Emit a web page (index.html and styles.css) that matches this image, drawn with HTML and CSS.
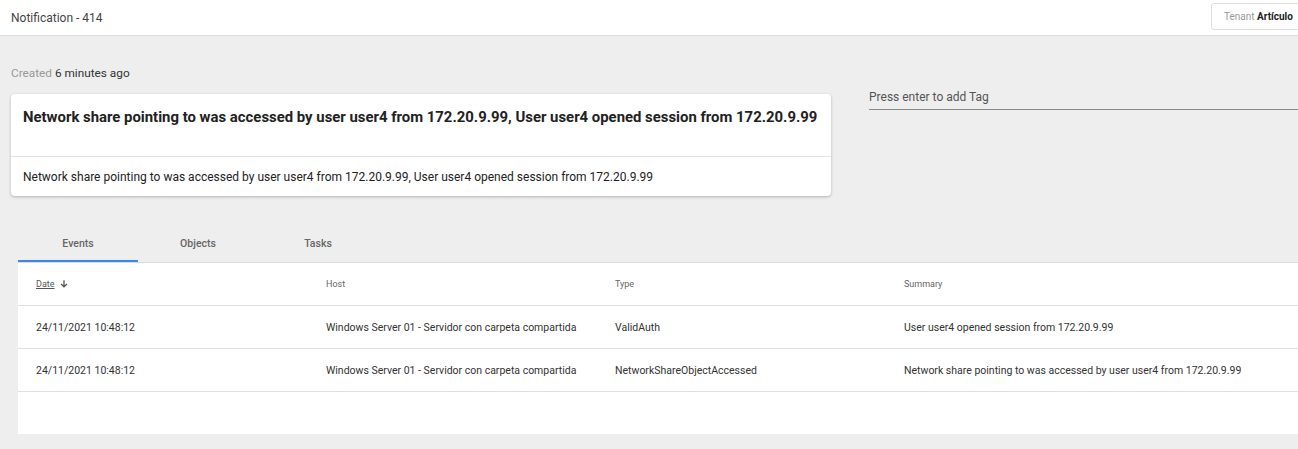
FILE: index.html
```html
<!DOCTYPE html>
<html lang="en">
<head>
<meta charset="utf-8">
<title>Notification - 414</title>
<link rel="stylesheet" href="styles.css">
</head>
<body>
<header class="topbar">
  <div class="page-title">Notification - 414</div>
  <div class="tenant"><span class="tenant-label">Tenant</span> <span class="tenant-name">Artículo</span></div>
</header>
<main class="content">
  <div class="meta"><span class="meta-label">Created</span> 6 minutes ago</div>
  <div class="top-row">
    <section class="card">
      <h1 class="card-title">Network share pointing to was accessed by user user4 from 172.20.9.99, User user4 opened session from 172.20.9.99</h1>
      <p class="card-body">Network share pointing to was accessed by user user4 from 172.20.9.99, User user4 opened session from 172.20.9.99</p>
    </section>
    <div class="tag-input">Press enter to add Tag</div>
  </div>
  <nav class="tabs">
    <div class="tab active">Events</div>
    <div class="tab">Objects</div>
    <div class="tab">Tasks</div>
  </nav>
  <section class="table">
    <div class="row head">
      <div class="cell"><span class="sort">Date</span><svg class="sort-icon" viewBox="0 0 12 12" width="10" height="10"><path d="M6 1.5v7.5M2.5 6L6 9.5 9.5 6" fill="none" stroke="#555" stroke-width="1.6"/></svg></div>
      <div class="cell">Host</div>
      <div class="cell">Type</div>
      <div class="cell">Summary</div>
    </div>
    <div class="row">
      <div class="cell">24/11/2021 10:48:12</div>
      <div class="cell">Windows Server 01 - Servidor con carpeta compartida</div>
      <div class="cell">ValidAuth</div>
      <div class="cell">User user4 opened session from 172.20.9.99</div>
    </div>
    <div class="row">
      <div class="cell">24/11/2021 10:48:12</div>
      <div class="cell">Windows Server 01 - Servidor con carpeta compartida</div>
      <div class="cell">NetworkShareObjectAccessed</div>
      <div class="cell">Network share pointing to was accessed by user user4 from 172.20.9.99</div>
    </div>
    <div class="table-foot"></div>
  </section>
</main>
</body>
</html>
```

FILE: styles.css
```css
html, body {
  margin: 0;
  padding: 0;
}
body {
  background: #eeeeee;
  font-family: Roboto, "Liberation Sans", sans-serif;
  color: #333;
  overflow: hidden;
  width: 1298px;
  height: 449px;
}
.topbar {
  height: 35px;
  background: #fff;
  border-bottom: 1px solid #dcdcdc;
  display: flex;
  align-items: center;
  justify-content: space-between;
  padding-left: 11px;
  box-sizing: content-box;
}
.page-title {
  font-size: 12px;
  color: #444;
}
.tenant {
  width: 100px;
  height: 27px;
  margin-right: -13px;
  margin-top: -2px;
  border: 1px solid #ddd;
  border-radius: 3px;
  box-sizing: border-box;
  padding-left: 12px;
  font-size: 10px;
  line-height: 25px;
  white-space: nowrap;
}
.tenant-label { color: #999; }
.tenant-name { color: #222; font-weight: 700; }
.content {
  padding: 30px 0 0 11px;
}
.meta {
  font-size: 11.8px;
  color: #333;
  line-height: 15px;
}
.meta-label { color: #999; }
.top-row {
  display: flex;
  align-items: flex-start;
  margin-top: 13px;
}
.card {
  width: 820px;
  background: #fff;
  border-radius: 4px;
  box-shadow: 0 1px 3px rgba(0,0,0,0.25);
  flex: none;
}
.card-title {
  margin: 0;
  font-size: 14.9px;
  font-weight: 700;
  color: #222;
  padding: 14px 12px 0;
  height: 48px;
  line-height: 18px;
  border-bottom: 1px solid #e3e3e3;
  white-space: nowrap;
}
.card-body {
  margin: 0;
  font-size: 12px;
  line-height: 15px;
  padding: 13px 12px 11px;
  color: #222;
  white-space: nowrap;
}
.tag-input {
  margin-left: 38px;
  flex: 1;
  margin-right: -20px;
  font-size: 12px;
  color: #555;
  line-height: 14px;
  margin-top: -4px;
  padding-bottom: 5px;
  border-bottom: 1px solid #8a8a8a;
}
.tabs {
  display: flex;
  margin-top: 32px;
  margin-left: 7px;
}
.tab {
  width: 120px;
  height: 34px;
  box-sizing: border-box;
  text-align: center;
  font-size: 10.5px;
  color: #666;
  font-weight: 500;
  line-height: 32px;
}
.tab.active {
  border-bottom: 2px solid #3b87f0;
}
.table {
  margin-left: 7px;
  margin-right: -40px;
  background: #fff;
  border-top: 1px solid #dcdcdc;
}
.row {
  display: grid;
  grid-template-columns: 290px 289px 289px 1fr;
  height: 43px;
  box-sizing: border-box;
  border-bottom: 1px solid #e0e0e0;
  align-items: center;
  font-size: 10.5px;
  color: #333;
}
.row.head {
  font-size: 9px;
  color: #666;
}
.cell {
  padding-left: 18px;
  white-space: nowrap;
  display: flex;
  align-items: center;
}
.sort {
  text-decoration: underline;
  color: #555;
}
.sort-icon {
  margin-left: 4px;
}
.table-foot {
  height: 42px;
}
```
